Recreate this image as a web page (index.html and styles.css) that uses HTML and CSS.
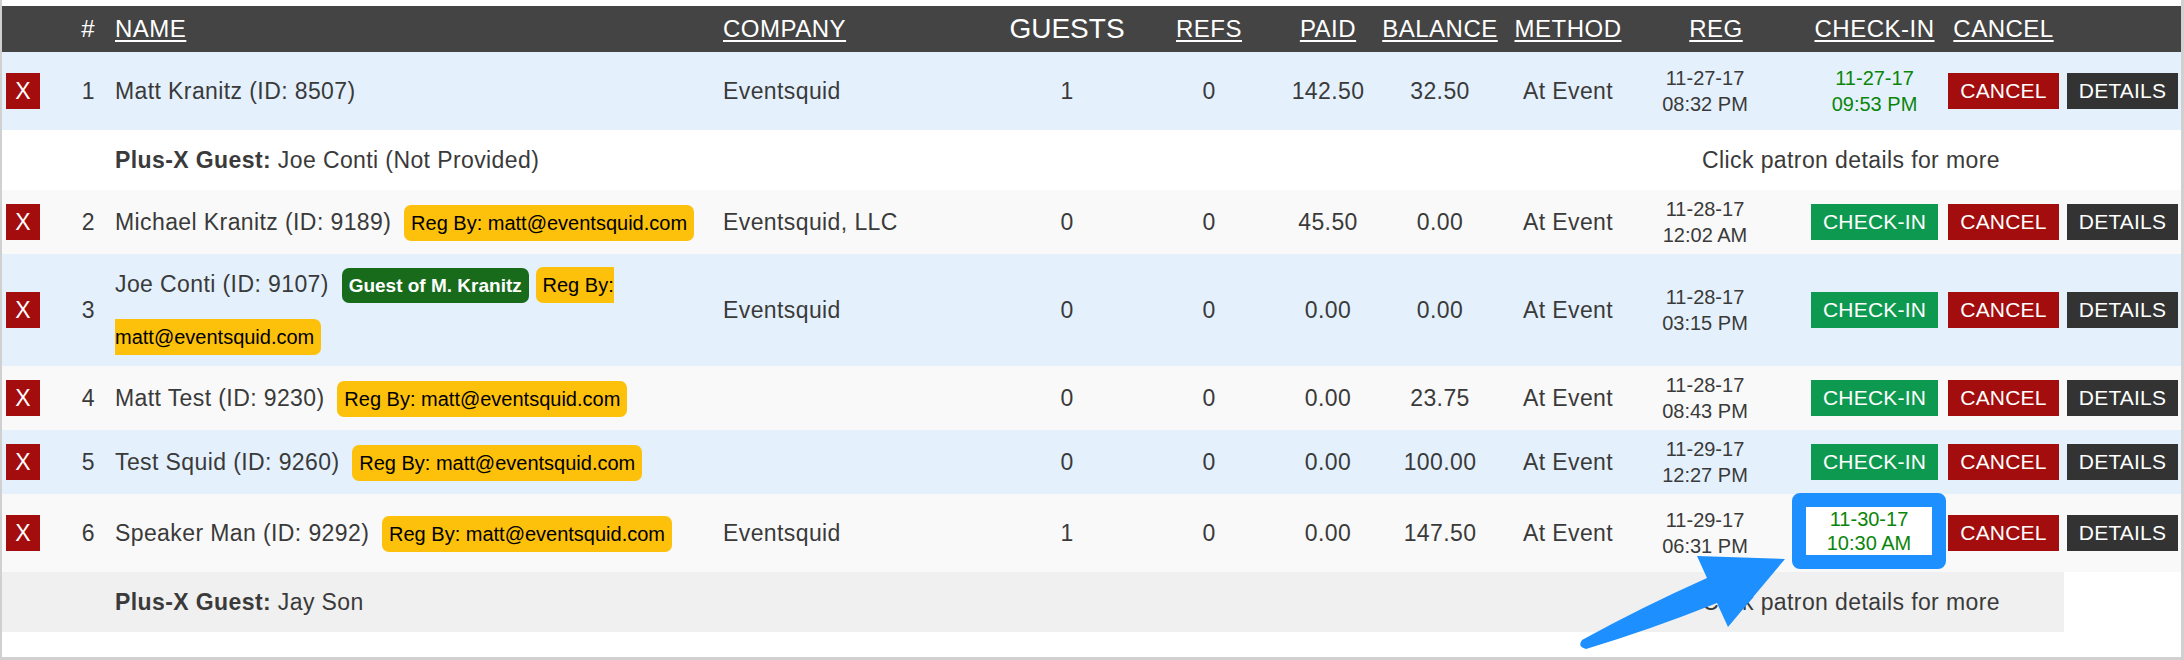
FILE: index.html
```html
<!DOCTYPE html>
<html lang="en">
  <head>
    <meta charset="UTF-8" />
    <title>Patrons</title>
    <link rel="stylesheet" href="styles.css">
  </head>
  <body>
    <div class="panel">
      <table class="patrons">
        <colgroup>
          <col class="c-x">
          <col class="c-num">
          <col class="c-name">
          <col class="c-company">
          <col class="c-guests">
          <col class="c-refs">
          <col class="c-paid">
          <col class="c-balance">
          <col class="c-method">
          <col class="c-reg">
          <col class="c-checkin">
          <col class="c-cancel">
          <col class="c-details">
        </colgroup>

        <!-- Column headers -->
        <thead>
          <tr>
            <th></th>
            <th class="num">#</th>
            <th class="left"><a href="#">NAME</a></th>
            <th class="left"><a href="#">COMPANY</a></th>
            <th class="guests">GUESTS</th>
            <th><a href="#">REFS</a></th>
            <th><a href="#">PAID</a></th>
            <th><a href="#">BALANCE</a></th>
            <th><a href="#">METHOD</a></th>
            <th class="reg-head"><a href="#">REG</a></th>
            <th class="checkin"><a href="#">CHECK-IN</a></th>
            <th><a href="#">CANCEL</a></th>
            <th></th>
          </tr>
        </thead>

        <tbody>
          <tr class="blue tall">
            <td class="xcell"><span class="btn-x">X</span></td>
            <td class="num">1</td>
            <td class="name">Matt Kranitz (ID: 8507)</td>
            <td class="left">Eventsquid</td>
            <td>1</td>
            <td>0</td>
            <td>142.50</td>
            <td>32.50</td>
            <td>At Event</td>
            <td class="date">11-27-17<br>08:32 PM</td>
            <td class="checkin"><span class="date in">11-27-17<br>09:53 PM</span></td>
            <td><span class="btn cancel">CANCEL</span></td>
            <td><span class="btn details">DETAILS</span></td>
          </tr>
          <tr class="plus">
            <td colspan="2"></td>
            <td colspan="7" class="left"><b>Plus-X Guest:</b> Joe Conti (Not Provided)</td>
            <td colspan="3" class="more">Click patron details for more</td>
            <td class="blank"></td>
          </tr>

          <tr class="grey">
            <td class="xcell"><span class="btn-x">X</span></td>
            <td class="num">2</td>
            <td class="name">Michael Kranitz (ID: 9189) <span class="tag reg">Reg By: matt@eventsquid.com</span></td>
            <td class="left">Eventsquid, LLC</td>
            <td>0</td>
            <td>0</td>
            <td>45.50</td>
            <td>0.00</td>
            <td>At Event</td>
            <td class="date">11-28-17<br>12:02 AM</td>
            <td class="checkin"><span class="btn check">CHECK-IN</span></td>
            <td><span class="btn cancel">CANCEL</span></td>
            <td><span class="btn details">DETAILS</span></td>
          </tr>

          <tr class="blue double">
            <td class="xcell"><span class="btn-x">X</span></td>
            <td class="num">3</td>
            <td class="name">Joe Conti (ID: 9107) <span class="tag guest">Guest of M. Kranitz</span> <span class="tag reg next">Reg By: matt@eventsquid.com</span></td>
            <td class="left">Eventsquid</td>
            <td>0</td>
            <td>0</td>
            <td>0.00</td>
            <td>0.00</td>
            <td>At Event</td>
            <td class="date">11-28-17<br>03:15 PM</td>
            <td class="checkin"><span class="btn check">CHECK-IN</span></td>
            <td><span class="btn cancel">CANCEL</span></td>
            <td><span class="btn details">DETAILS</span></td>
          </tr>

          <tr class="grey">
            <td class="xcell"><span class="btn-x">X</span></td>
            <td class="num">4</td>
            <td class="name">Matt Test (ID: 9230) <span class="tag reg">Reg By: matt@eventsquid.com</span></td>
            <td class="left"></td>
            <td>0</td>
            <td>0</td>
            <td>0.00</td>
            <td>23.75</td>
            <td>At Event</td>
            <td class="date">11-28-17<br>08:43 PM</td>
            <td class="checkin"><span class="btn check">CHECK-IN</span></td>
            <td><span class="btn cancel">CANCEL</span></td>
            <td><span class="btn details">DETAILS</span></td>
          </tr>

          <tr class="blue">
            <td class="xcell"><span class="btn-x">X</span></td>
            <td class="num">5</td>
            <td class="name">Test Squid (ID: 9260) <span class="tag reg">Reg By: matt@eventsquid.com</span></td>
            <td class="left"></td>
            <td>0</td>
            <td>0</td>
            <td>0.00</td>
            <td>100.00</td>
            <td>At Event</td>
            <td class="date">11-29-17<br>12:27 PM</td>
            <td class="checkin"><span class="btn check">CHECK-IN</span></td>
            <td><span class="btn cancel">CANCEL</span></td>
            <td><span class="btn details">DETAILS</span></td>
          </tr>

          <tr class="grey tall">
            <td class="xcell"><span class="btn-x">X</span></td>
            <td class="num">6</td>
            <td class="name">Speaker Man (ID: 9292) <span class="tag reg">Reg By: matt@eventsquid.com</span></td>
            <td class="left">Eventsquid</td>
            <td>1</td>
            <td>0</td>
            <td>0.00</td>
            <td>147.50</td>
            <td>At Event</td>
            <td class="date">11-29-17<br>06:31 PM</td>
            <td class="checkin boxed"><span class="highlight date in">11-30-17<br>10:30 AM</span></td>
            <td><span class="btn cancel">CANCEL</span></td>
            <td><span class="btn details">DETAILS</span></td>
          </tr>
          <tr class="plus shaded">
            <td colspan="2"></td>
            <td colspan="7" class="left"><b>Plus-X Guest:</b> Jay Son</td>
            <td colspan="3" class="more">Click patron details for more</td>
            <td class="blank"></td>
          </tr>
        </tbody>
      </table>

      <!-- Annotation arrow pointing at the check-in time -->
      <svg class="arrow" width="230" height="110" viewBox="0 0 230 110">
        <path d="M215,14 L127,11 L137,33 Q72,62 12,95 Q7,102 16,104 Q82,84 147,58 L158,82 Z" fill="#1e8fff" />
      </svg>
    </div>
  </body>
</html>
```

FILE: styles.css
```css
/* Reset */
html,
body {
  margin: 0;
  padding: 0;
  background: #fff;
  font-family: "Liberation Sans", Arial, sans-serif;
  color: #3a3a3a;
}

/* Outer box */
.panel {
  position: relative;
  width: 2184px;
  height: 660px;
  box-sizing: border-box;
  padding-top: 6px;
  border-left: 2px solid #d0d0d0;
  border-right: 3px solid #d0d0d0;
  border-bottom: 3px solid #d0d0d0;
}

/* Table */
.patrons {
  width: 2179px;
  border-collapse: collapse;
  table-layout: fixed;
  font-size: 23px;
  letter-spacing: 0.4px;
}

.c-x { width: 50px; }
.c-num { width: 53px; }
.c-name { width: 608px; }
.c-company { width: 277px; }
.c-guests { width: 154px; }
.c-refs { width: 130px; }
.c-paid { width: 108px; }
.c-balance { width: 116px; }
.c-method { width: 140px; }
.c-reg { width: 134px; }
.c-checkin { width: 171px; }
.c-cancel { width: 121px; }
.c-details { width: 117px; }

.patrons th,
.patrons td {
  padding: 2px 0;
  text-align: center;
  vertical-align: middle;
  white-space: nowrap;
}

/* Header row */
.patrons thead tr {
  height: 46px;
  background: #444;
}

.patrons th {
  color: #fff;
  font-weight: normal;
  font-size: 24px;
  letter-spacing: 0.5px;
}

.patrons th a {
  color: #fff;
  text-decoration: underline;
  text-decoration-thickness: 2px;
  text-underline-offset: 3px;
}

.patrons th.guests {
  font-size: 28px;
  letter-spacing: 0;
}

.patrons th.reg-head {
  padding-left: 22px;
}

/* Rows */
.patrons tbody tr {
  height: 64px;
}

.patrons tr.tall {
  height: 78px;
}

.patrons tr.double {
  height: 112px;
}

.patrons tr.plus {
  height: 60px;
}

.blue {
  background: #e4f1fd;
}

.grey {
  background: #f9f9f9;
}

.plus.shaded td {
  background: #f0f0f0;
}

.plus.shaded td.blank {
  background: #fff;
}

/* Cell types */
.patrons .left {
  text-align: left;
  padding-left: 10px;
}

.patrons .num {
  text-align: right;
  padding-right: 10px;
}

.patrons .xcell {
  text-align: left;
  padding-left: 4px;
  line-height: 1;
}

.patrons .name {
  text-align: left;
  padding-left: 10px;
  line-height: 52px;
  white-space: normal;
}

.patrons .checkin {
  padding-left: 34px;
  line-height: 1;
}

.patrons .checkin.boxed {
  padding-top: 0;
  padding-bottom: 0;
}

.patrons .more {
  text-align: center;
}

.date {
  font-size: 20px;
  line-height: 26px;
  letter-spacing: 0;
}

.date.in {
  display: inline-block;
  color: #0a850a;
}

/* Buttons */
.btn-x {
  display: inline-block;
  width: 34px;
  height: 36px;
  line-height: 36px;
  background: #a30d0d;
  color: #fff;
  font-size: 23px;
  text-align: center;
  letter-spacing: 0;
}

.btn {
  display: inline-block;
  height: 36px;
  line-height: 36px;
  padding: 0 12px;
  color: #fff;
  font-size: 21px;
  letter-spacing: 0.2px;
}

.btn.check {
  background: #0d9a50;
}

.btn.cancel {
  background: #a30d0d;
}

.btn.details {
  background: #333;
}

/* Badges next to names */
.tag {
  padding: 7px 7px;
  margin-left: 6px;
  border-radius: 7px;
  font-size: 20px;
  line-height: 1;
  color: #000;
  letter-spacing: 0;
}

.tag.next {
  margin-left: 0;
}

.tag.reg {
  background: #fdc00b;
}

.tag.guest {
  background: #176b1b;
  color: #fff;
  font-weight: bold;
  font-size: 19px;
}

/* Annotation: highlighted check-in */
.highlight {
  position: relative;
  top: -2px;
  width: 126px;
  line-height: 24px;
  background: #fff;
  border: 14px solid #1e8fff;
  border-radius: 8px;
  margin-left: -14px;
  vertical-align: middle;
}

.arrow {
  position: absolute;
  left: 1568px;
  top: 545px;
  pointer-events: none;
}
```
